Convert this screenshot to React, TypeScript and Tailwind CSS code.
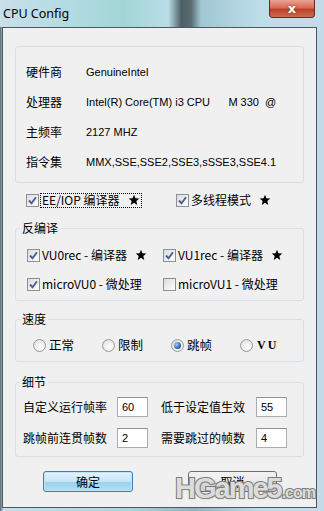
import React from 'react';

const cjk = "font-['Noto_Sans_CJK_SC','Noto_Sans',sans-serif]";
const latin = "font-['Liberation_Sans','Noto_Sans_CJK_SC',sans-serif]";

const CheckBox: React.FC<{ checked?: boolean }> = ({ checked }) => (
  <span className="flex h-[13px] w-[13px] shrink-0 items-center justify-center border border-[#8e8f8f] bg-[linear-gradient(135deg,#dcdcdc,#ffffff)]">
    {checked && (
      <svg width="11" height="11" viewBox="0 0 11 11">
        <path d="M2 5.5 L4.5 8.2 L9 2.2" fill="none" stroke="#4a5f97" strokeWidth="1.9" />
      </svg>
    )}
  </span>
);

const Radio: React.FC<{ checked?: boolean }> = ({ checked }) => (
  <span className="flex h-[13px] w-[13px] shrink-0 items-center justify-center rounded-full border border-[#9a9a9a] bg-[radial-gradient(circle_at_60%_65%,#ffffff,#d8d8d8)]">
    {checked && (
      <span className="h-[7px] w-[7px] rounded-full bg-[radial-gradient(circle_at_35%_35%,#9fd3ff,#1d5aa8_70%)]" />
    )}
  </span>
);

const Star = () => (
  <svg className="ml-[8px] shrink-0" width="12" height="12" viewBox="0 0 24 24">
    <path d="M12 1.5 L14.9 8.6 L22.5 9.2 L16.7 14.2 L18.5 21.8 L12 17.7 L5.5 21.8 L7.3 14.2 L1.5 9.2 L9.1 8.6 Z" fill="#000" />
  </svg>
);

const Group: React.FC<{ title: string; className?: string; children: React.ReactNode }> = ({ title, className, children }) => (
  <fieldset className="rounded-[3px] border border-[#d5dfe5]">
    <legend className={`ml-[4px] px-[2px] text-[12px] leading-[16px] ${cjk}`}>{title}</legend>
    <div className={className}>{children}</div>
  </fieldset>
);

const Field: React.FC<{ label: string; value: string; labelW: string }> = ({ label, value, labelW }) => (
  <div className="flex items-center">
    <span className={`${labelW} text-[12px] ${cjk}`}>{label}</span>
    <span className={`flex h-[20px] w-[31px] items-center border border-[#abadb3] border-t-[#8d9095] bg-white pl-[4px] text-[11px] ${latin}`}>{value}</span>
  </div>
);

export default function App() {
  const info = [
    ['硬件商', 'GenuineIntel'],
    ['处理器', 'Intel(R) Core(TM) i3 CPU      M 330  @'],
    ['主频率', '2127 MHZ'],
    ['指令集', 'MMX,SSE,SSE2,SSE3,sSSE3,SSE4.1'],
  ];

  return (
    <div className="relative h-[511px] w-[324px] overflow-hidden bg-[linear-gradient(90deg,#56646b_0%,#c9dfea_1%,#b5dbe2_20%,#a9d6d9_40%,#8fb4c0_60%,#bcdde9_80%,#c4dbe8_100%)] text-black">
      {/* title bar */}
      <div className="flex h-[27px] items-start justify-between bg-[linear-gradient(90deg,#c9dfea_0%,#b5dbe2_20%,#a2d6d6_38%,#b9dde6_52%,#4c5d64_56%,#5a6c72_59%,#9fc7d3_62%,#bcdde9_80%,#c4dbe8_100%)]">
        <span className="ml-[3px] mt-[6px] text-[12.5px] leading-[16px] font-['Noto_Sans',sans-serif]">CPU Config</span>
        <span className="mr-[9px] flex h-[18px] w-[46px] items-center justify-center rounded-b-[4px] border border-t-0 border-[#6b2a22] bg-[linear-gradient(180deg,#e8a393_0%,#d66b55_45%,#c0402a_55%,#cc6a50_100%)]">
          <span className="text-[13px] font-bold leading-none text-white [text-shadow:0_0_2px_#7a2010] font-['DejaVu_Sans',sans-serif]">x</span>
        </span>
      </div>

      {/* window body */}
      <div className="ml-[2px] flex h-[481px] w-[315px] flex-col border border-[#4d5962] bg-[#f0f0f0] pl-[12px] pr-[12px] pt-[18px]">
        {/* info panel */}
        <div className="flex h-[137px] flex-col rounded-[3px] border border-[#dcdcdc] pl-[10px] pt-[10px]">
          {info.map(([k, v]) => (
            <div key={k} className="flex h-[30px] items-center">
              <span className={`w-[60px] text-[12px] ${cjk}`}>{k}</span>
              <span className={`whitespace-pre text-[11px] ${latin}`}>{v}</span>
            </div>
          ))}
        </div>

        {/* top checkboxes */}
        <div className="mt-[7px] flex h-[20px] items-center pl-[11px]">
          <div className="flex w-[150px] items-center">
            <CheckBox checked />
            <span className="ml-[1px] flex h-[15px] items-center border border-dotted border-black pl-[1px] pr-[1px]">
              <span className={`text-[12px] leading-none ${cjk}`}>EE/IOP 编译器</span>
              <Star />
            </span>
          </div>
          <div className="flex items-center">
            <CheckBox checked />
            <span className={`ml-[2px] text-[12px] ${cjk}`}>多线程模式</span>
            <Star />
          </div>
        </div>

        {/* recompiler group */}
        <div className="mt-[10px]">
          <Group title="反编译" className="pb-[2px] pl-[11px]">
            <div className="mt-[4px] flex h-[30px] items-center">
              <div className="flex w-[136px] items-center">
                <CheckBox checked />
                <span className={`ml-[2px] text-[12px] ${cjk}`}>VU0rec - 编译器</span>
                <Star />
              </div>
              <div className="flex items-center">
                <CheckBox checked />
                <span className={`ml-[2px] text-[12px] ${cjk}`}>VU1rec - 编译器</span>
                <Star />
              </div>
            </div>
            <div className="flex h-[28px] items-center">
              <div className="flex w-[136px] items-center">
                <CheckBox checked />
                <span className={`ml-[2px] text-[12px] ${cjk}`}>microVU0 - 微处理</span>
              </div>
              <div className="flex items-center">
                <CheckBox />
                <span className={`ml-[2px] text-[12px] ${cjk}`}>microVU1 - 微处理</span>
              </div>
            </div>
          </Group>
        </div>

        {/* speed group */}
        <div className="mt-[10px]">
          <Group title="速度" className="pb-[6px] pl-[17px]">
            <div className="mt-[8px] flex h-[20px] items-center">
              {['正常', '限制', '跳帧'].map((t, i) => (
                <div key={t} className="flex w-[69px] items-center">
                  <Radio checked={i === 2} />
                  <span className={`ml-[3px] text-[12.5px] ${cjk}`}>{t}</span>
                </div>
              ))}
              <div className="flex items-center">
                <Radio />
                <span className="ml-[4px] text-[12px] font-bold tracking-[2px] font-['Liberation_Serif',serif]">VU</span>
              </div>
            </div>
          </Group>
        </div>

        {/* detail group */}
        <div className="mt-[12px]">
          <Group title="细节" className="pb-[8px] pl-[7px]">
            <div className="mt-[7px] flex items-center">
              <div className="w-[138px]"><Field label="自定义运行帧率" value="60" labelW="w-[94px]" /></div>
              <Field label="低于设定值生效" value="55" labelW="w-[95px]" />
            </div>
            <div className="mt-[11px] flex items-center">
              <div className="w-[138px]"><Field label="跳帧前连贯帧数" value="2" labelW="w-[94px]" /></div>
              <Field label="需要跳过的帧数" value="4" labelW="w-[95px]" />
            </div>
          </Group>
        </div>

        {/* buttons */}
        <div className="mt-[14px] flex pl-[28px]">
          <button className={`flex h-[21px] w-[90px] items-center justify-center rounded-[3px] border border-[#3c7fb1] bg-[linear-gradient(180deg,#e5f4fc_0%,#c4e5f6_50%,#98d1ef_51%,#b4def3_100%)] text-[12px] shadow-[inset_0_0_0_1px_#bde6fd] ${cjk}`}>
            确定
          </button>
          <button className={`ml-[55px] flex h-[21px] w-[89px] items-center justify-center rounded-[3px] border border-[#707070] bg-[linear-gradient(180deg,#f2f2f2_0%,#ebebeb_50%,#dddddd_51%,#cfcfcf_100%)] text-[12px] ${cjk}`}>
            取消
          </button>
        </div>
      </div>

      {/* watermark */}
      <div className="pointer-events-none absolute left-[175px] top-[467px] flex items-baseline font-['Liberation_Sans',sans-serif] font-bold text-[#dcdcdc] [-webkit-text-stroke:2px_#7b7b7b] [paint-order:stroke_fill] [text-shadow:1px_1px_1px_#8a8a8a]">
        <span className="text-[29px] tracking-[-2px]">HGame5</span>
        <span className="ml-[1px] text-[16px] tracking-[-1px]">.com</span>
      </div>
    </div>
  );
}
